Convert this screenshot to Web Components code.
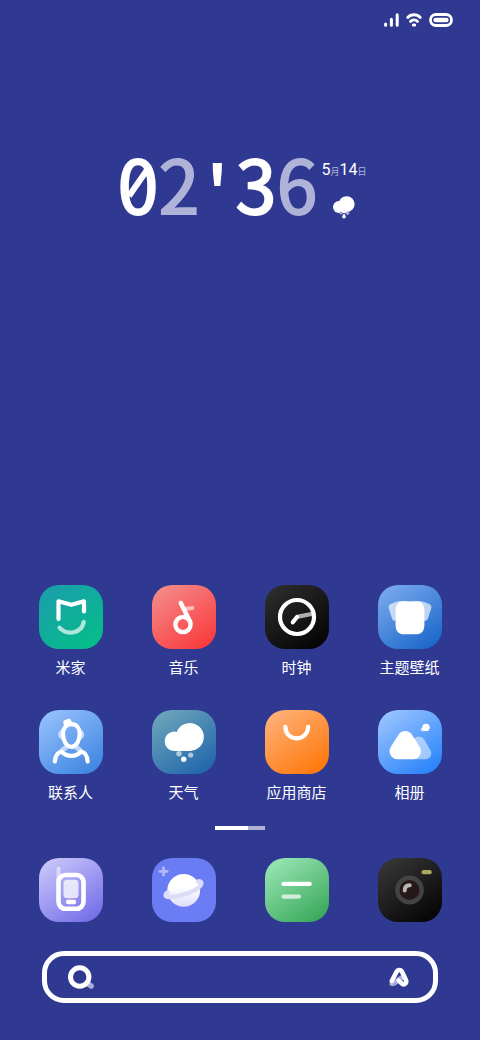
<!DOCTYPE html>
<html lang="zh-CN">
<head>
<meta charset="utf-8">
<meta name="viewport" content="width=device-width, initial-scale=1">
<title>主屏幕</title>
<style>
  body {
    background: #303992;
    color: #ffffff;
    font-family: "Noto Sans CJK SC", sans-serif;
    margin: 0;
  }
</style>
</head>
<body>
<home-screen></home-screen>

<script>
// Status icons across the top edge
class StatusBar extends HTMLElement {
  constructor() {
    super();

    const template = document.createElement( 'template' );
    template.innerHTML = /* template */ `
      <style>
        :host {
          align-items: center;
          box-sizing: border-box;
          display: flex;
          gap: 7px;
          height: 40px;
          justify-content: flex-end;
          padding: 0 27px 0 0;
        }

        svg {
          display: block;
        }
      </style>
      <svg width="15" height="14" viewBox="0 0 15 14" fill="none" stroke="#fff" stroke-width="3" stroke-linecap="round" role="img" aria-label="信号">
        <path d="M1.6 12.2v-1.2M7.4 12.2V6.2M13.2 12.2V1.8"/>
      </svg>
      <svg width="16" height="14" viewBox="0 0 16 14" fill="none" stroke="#fff" stroke-width="2.9" stroke-linecap="round" role="img" aria-label="无线网络">
        <path d="M1.8 4.5C5 .8 11 .8 14.2 4.5M4.6 8.4C6.3 6.3 9.7 6.3 11.4 8.4"/>
        <path d="M7.3 12h1.4" stroke-width="3"/>
      </svg>
      <svg width="24" height="14" viewBox="0 0 24 14" role="img" aria-label="电池">
        <rect x="1.5" y="1.5" width="21" height="11" rx="5.5" fill="none" stroke="#fff" stroke-width="2.8"/>
        <rect x="4.4" y="4.8" width="15.2" height="4.4" rx="2.2" fill="#fff"/>
      </svg>
    `;

    // Root
    this.attachShadow( {mode: 'open'} );
    this.shadowRoot.appendChild( template.content.cloneNode( true ) );
  }
}

window.customElements.define( 'status-bar', StatusBar );

// Time, date and current weather
class ClockWidget extends HTMLElement {
  constructor() {
    super();

    const template = document.createElement( 'template' );
    template.innerHTML = /* template */ `
      <style>
        :host {
          align-items: flex-start;
          display: flex;
          gap: 4px;
          justify-content: center;
          padding: 0 0 0 4px;
        }

        time {
          display: block;
        }

        .time {
          align-items: start;
          display: grid;
          font-family: "Noto Sans CJK SC", sans-serif;
          font-size: 73px;
          grid-template-columns: 41px 41px 36px 41px 41px;
          line-height: 64px;
          text-align: center;
          -webkit-text-stroke: 2px currentColor;
        }

        .dim {
          color: #b0b3d8;
        }

        .zero {
          display: grid;
        }

        .zero > * {
          grid-area: 1 / 1;
          place-self: center;
        }

        .tick {
          padding: 14px 0 0 0;
        }

        .side {
          align-items: center;
          display: flex;
          flex-direction: column;
          gap: 14px;
          padding: 10px 0 0 0;
        }

        .date {
          font-family: Roboto, "Noto Sans CJK SC", sans-serif;
          font-size: 16px;
          line-height: 20px;
        }

        .date span {
          font-size: 9px;
        }
      </style>
      <time class="time">
        <span class="zero">
          <span>0</span>
          <svg width="24" height="40" viewBox="0 0 24 40" fill="none" stroke="#fff" stroke-width="6"><path d="M3 34L21 8"/></svg>
        </span>
        <span class="dim">2</span>
        <span class="tick">'</span>
        <span>3</span>
        <span class="dim">6</span>
      </time>
      <div class="side">
        <time class="date">5<span class="dim">月</span>14<span class="dim">日</span></time>
        <svg width="22" height="23" viewBox="0 0 22 23" fill="#fff" role="img" aria-label="小雨">
          <circle cx="13.6" cy="8.2" r="8"/>
          <circle cx="6" cy="11" r="6"/>
          <path d="M6 17h8V9H6z"/>
          <circle cx="8" cy="17" r="1.6" fill="#a4a9d6"/>
          <circle cx="14.5" cy="17.3" r="1.8" fill="#a4a9d6"/>
          <path d="M11 17.4c1.2 1.7 1.8 2.5 1.8 3.4a1.8 1.8 0 0 1-3.6 0c0-.9.6-1.7 1.8-3.4z"/>
        </svg>
      </div>
    `;

    // Root
    this.attachShadow( {mode: 'open'} );
    this.shadowRoot.appendChild( template.content.cloneNode( true ) );
  }
}

window.customElements.define( 'clock-widget', ClockWidget );

// Launcher tile
// Drawing goes in the slot
class AppTile extends HTMLElement {
  constructor() {
    super();

    const template = document.createElement( 'template' );
    template.innerHTML = /* template */ `
      <style>
        :host {
          display: block;
        }

        a {
          align-items: center;
          color: inherit;
          display: flex;
          flex-direction: column;
          gap: 6px;
          text-decoration: none;
        }

        .icon {
          background: linear-gradient( 145deg, var( --from ), var( --to ) );
          border-radius: 20px;
          height: 64px;
          width: 64px;
        }

        .label {
          font-size: 15px;
          line-height: 24px;
          white-space: nowrap;
        }

        .label:empty {
          display: none;
        }
      </style>
      <a href="#">
        <span class="icon"><slot></slot></span>
        <span class="label"></span>
      </a>
    `;

    // Root
    this.attachShadow( {mode: 'open'} );
    this.shadowRoot.appendChild( template.content.cloneNode( true ) );
    this.$link = this.shadowRoot.querySelector( 'a' );
    this.$label = this.shadowRoot.querySelector( '.label' );
  }

  // When attributes change
  _render() {
    this.$label.textContent = this.label === null ? '' : this.label;

    if( this.name !== null ) {
      this.$link.setAttribute( 'aria-label', this.name );
    }
  }

  // Setup
  connectedCallback() {
    this._render();
  }

  // Watched attributes
  static get observedAttributes() {
    return [
      'label',
      'name'
    ];
  }

  // Observed attribute has changed
  // Update render
  attributeChangedCallback( name, old, value ) {
    this._render();
  }

  get label() {
    return this.getAttribute( 'label' );
  }

  get name() {
    return this.getAttribute( 'name' );
  }
}

window.customElements.define( 'app-tile', AppTile );

// Page position
class PageIndicator extends HTMLElement {
  constructor() {
    super();

    const template = document.createElement( 'template' );
    template.innerHTML = /* template */ `
      <style>
        :host {
          display: flex;
          justify-content: center;
        }

        span {
          background: #b0b3d8;
          height: 4px;
          width: 17px;
        }

        .current {
          background: #ffffff;
          width: 33px;
        }
      </style>
      <span class="current"></span>
      <span></span>
    `;

    // Root
    this.attachShadow( {mode: 'open'} );
    this.shadowRoot.appendChild( template.content.cloneNode( true ) );
  }
}

window.customElements.define( 'page-indicator', PageIndicator );

class SearchBar extends HTMLElement {
  constructor() {
    super();

    const template = document.createElement( 'template' );
    template.innerHTML = /* template */ `
      <style>
        :host {
          display: block;
        }

        form {
          align-items: center;
          border: 5px solid #ffffff;
          border-radius: 22px;
          box-sizing: border-box;
          display: flex;
          height: 52px;
          padding: 0 24px 0 20px;
        }

        label, svg {
          display: block;
        }

        input {
          background: none;
          border: none;
          color: inherit;
          flex: 1;
          font: inherit;
          font-size: 16px;
          min-width: 0;
          outline: none;
          padding: 0 12px;
        }

        button {
          background: none;
          border: none;
          padding: 0;
        }
      </style>
      <form>
        <label for="query" aria-label="搜索">
          <svg width="28" height="26" viewBox="0 0 28 26" fill="none" stroke="#fff">
            <path d="M22 20.5l2.2 1.5" stroke="#a9add8" stroke-width="5.5" stroke-linecap="round"/>
            <circle cx="12.7" cy="13" r="9.2" stroke-width="5"/>
          </svg>
        </label>
        <input id="query" type="text">
        <button type="button" aria-label="语音助手">
          <svg width="20" height="20" viewBox="0 0 20 20" fill="none" stroke-width="5" stroke-linecap="round" stroke-linejoin="round">
            <path d="M3 16.6C7.5 17.4 8 11.5 12.5 11" stroke="#a9add8"/>
            <path d="M2.8 14L7.6 4.8C8.8 2.4 11.8 2.4 13 4.8L17 13.2C18.2 16.6 14.8 18.6 12.4 16.2L9.8 13.6" stroke="#fff" stroke-width="4.6"/>
          </svg>
        </button>
      </form>
    `;

    // Root
    this.attachShadow( {mode: 'open'} );
    this.shadowRoot.appendChild( template.content.cloneNode( true ) );
  }
}

window.customElements.define( 'search-bar', SearchBar );

class HomeScreen extends HTMLElement {
  constructor() {
    super();

    const template = document.createElement( 'template' );
    template.innerHTML = /* template */ `
      <style>
        :host {
          box-sizing: border-box;
          display: flex;
          flex-direction: column;
          min-height: 100vh;
          padding: 0 0 37px 0;
        }

        clock-widget {
          margin: 110px 0 0 0;
        }

        .apps {
          display: grid;
          grid-template-columns: repeat( 4, 1fr );
          margin: auto 14px 0 14px;
          row-gap: 31px;
        }

        .dock {
          margin: 28px 14px 0 14px;
        }

        page-indicator {
          margin: 22px 0 0 0;
        }

        search-bar {
          margin: 29px 42px 0 42px;
        }

        svg {
          display: block;
          fill: none;
          height: 64px;
          stroke-linecap: round;
          stroke-linejoin: round;
          width: 64px;
        }
      </style>
      <status-bar></status-bar>
      <clock-widget></clock-widget>
      <nav class="apps">
        <app-tile label="米家" style="--from: #1c9cae; --to: #03c086">
          <svg viewBox="0 0 64 64" stroke="#fff" stroke-width="4.2">
            <path d="M19.5 34V16.3L32.3 19.8L45 16.3V26.5"/>
            <path d="M20.5 42.7C28 51 42.5 48.5 44.8 37" opacity=".68"/>
          </svg>
        </app-tile>
        <app-tile label="音乐" style="--from: #f49090; --to: #fa3335">
          <svg viewBox="0 0 64 64" stroke="#fff" stroke-width="4.4">
            <path d="M33 24L40.5 23" opacity=".55" stroke-width="4"/>
            <circle cx="31" cy="39.5" r="7.6"/>
            <path d="M28.8 18L38 36.5"/>
          </svg>
        </app-tile>
        <app-tile label="时钟" style="--from: #303030; --to: #000000">
          <svg viewBox="0 0 64 64" stroke="#fff" stroke-width="4.2">
            <path d="M33 31.6L48 28.8" opacity=".65" stroke-linecap="butt"/>
            <circle cx="32" cy="32" r="17"/>
            <path d="M32 32L27.8 37.3"/>
          </svg>
        </app-tile>
        <app-tile label="主题壁纸" style="--from: #80aef0; --to: #1261c8">
          <svg viewBox="0 0 64 64">
            <path d="M26 16C20 15.5 16 17.5 12.8 19C10.5 20 10.2 22 11 24L13.5 32C14.5 35.5 16 36.5 19 35.5H45C48 36.5 49.5 35.5 50.5 32L53 24C53.8 22 53.5 20 51.2 19C48 17.5 44 15.5 38 16z" fill="#fff" opacity=".65"/>
            <path d="M25.5 16.3C28.5 17.3 35.5 17.3 38.5 16.3C43.5 16 46.4 20.5 46.4 25V40C46.4 46 43.5 49.3 37.5 49.3H26.5C20.5 49.3 17.6 46 17.6 40V25C17.6 20.5 20.5 16 25.5 16.3z" fill="#fff"/>
          </svg>
        </app-tile>
        <app-tile label="联系人" style="--from: #9cc4ff; --to: #3780de">
          <svg viewBox="0 0 64 64" stroke="#fff" stroke-width="4.2">
            <g opacity=".6">
              <path d="M23.5 19.5C17.5 21 18 28.5 24 29.5M41 19.5C47 21 46.5 28.5 40.5 29.5" fill="#fff" stroke="none"/>
              <path d="M27.5 37L22.5 41M37 37L42 41" stroke-linecap="butt" stroke-width="5"/>
            </g>
            <path d="M27 12.5L29.8 11.5" stroke-width="5.4"/>
            <path d="M32.3 14.2C37.5 14.2 40.7 18 40.7 23.5C40.7 30 37.5 36.8 32.3 36.8C27 36.8 24 30 24 23.5C24 18 27 14.2 32.3 14.2z"/>
            <path d="M15.8 51.5C16.3 45.5 18.3 42.5 22.3 41.5C28 47.3 37 47.3 42.3 41.5C46.3 42.5 48.3 45.5 48.6 51.5"/>
          </svg>
        </app-tile>
        <app-tile label="天气" style="--from: #73aabb; --to: #1a60aa">
          <svg viewBox="0 0 64 64">
            <path d="M22.5 41A9.7 9.7 0 1 1 24.8 21.9A14 14 0 1 1 37.3 41z" fill="#fff"/>
            <circle cx="27" cy="43.7" r="2.7" fill="#fff" opacity=".6"/>
            <circle cx="38.7" cy="45" r="2.6" fill="#fff" opacity=".6"/>
            <circle cx="31.7" cy="49.2" r="2.7" fill="#fff"/>
          </svg>
        </app-tile>
        <app-tile label="应用商店" style="--from: #ffb580; --to: #ff7200">
          <svg viewBox="0 0 64 64" stroke="#fff" stroke-width="4.2">
            <path d="M20.3 16.8C21 32.3 42.3 32.3 43.2 16.8"/>
          </svg>
        </app-tile>
        <app-tile label="相册" style="--from: #a3c9ff; --to: #1d7dfa">
          <svg viewBox="0 0 64 64">
            <path d="M41 32.5L34 43.3H47.3z" fill="#fff" stroke="#fff" stroke-width="12" opacity=".5"/>
            <path d="M27.3 29L19.5 41.3H35z" fill="#fff" stroke="#fff" stroke-width="16"/>
            <circle cx="44.7" cy="19.5" r="2.1" fill="#fff" opacity=".7"/>
            <circle cx="48" cy="17.4" r="3.7" fill="#fff"/>
          </svg>
        </app-tile>
      </nav>
      <page-indicator></page-indicator>
      <nav class="apps dock">
        <app-tile name="电话" style="--from: #d0cdfc; --to: #6c66e6">
          <svg viewBox="0 0 64 64">
            <path d="M19.5 10.5V24" stroke="#fff" stroke-width="4" opacity=".5"/>
            <rect x="19.5" y="17" width="25" height="33.8" rx="7" stroke="#fff" stroke-width="4.6"/>
            <rect x="24.5" y="21.8" width="15" height="18.5" rx="3.5" fill="#fff" opacity=".75"/>
            <rect x="26.8" y="41.8" width="10.4" height="4.4" rx="2.2" fill="#fff"/>
          </svg>
        </app-tile>
        <app-tile name="浏览器" style="--from: #697cf2; --to: #6c7cf5">
          <svg viewBox="0 0 64 64">
            <defs>
              <linearGradient id="planet" x1="0" y1="0" x2="0" y2="1">
                <stop offset=".4" stop-color="#fff"/>
                <stop offset="1" stop-color="#dddcfa"/>
              </linearGradient>
            </defs>
            <path d="M11.5 9.8V17M7.9 13.4H15.1" stroke="#b1b9fa" stroke-width="2.8"/>
            <circle cx="31.7" cy="32.3" r="16.4" fill="url(#planet)"/>
            <path d="M15.5 34.5C12.5 36.5 13 39.5 18 39C24 38.7 31 37.3 37 34.8C43 32.5 48.5 29 49.3 26C49.8 23.5 48 23 46 23.5" stroke="#dcdbfa" stroke-width="4.4"/>
          </svg>
        </app-tile>
        <app-tile name="短信" style="--from: #a0eabb; --to: #30a353">
          <svg viewBox="0 0 64 64" stroke="#fff" stroke-width="4.2">
            <path d="M18.5 25.9H44.7"/>
            <path d="M18.5 38.6H34" opacity=".7"/>
          </svg>
        </app-tile>
        <app-tile name="相机" style="--from: #3a3a3a; --to: #000000">
          <svg viewBox="0 0 64 64">
            <circle cx="31.5" cy="32" r="12.2" fill="#261819" stroke="#434343" stroke-width="4.4"/>
            <path d="M26.7 32.5C26.7 29 28.5 27.2 31.7 27.2" stroke="#b9b5b5" stroke-width="4"/>
            <rect x="43.5" y="12" width="10.3" height="4.3" rx="2.1" fill="#aaa860"/>
          </svg>
        </app-tile>
      </nav>
      <search-bar></search-bar>
    `;

    // Root
    this.attachShadow( {mode: 'open'} );
    this.shadowRoot.appendChild( template.content.cloneNode( true ) );
  }
}

window.customElements.define( 'home-screen', HomeScreen );
</script>
</body>
</html>
